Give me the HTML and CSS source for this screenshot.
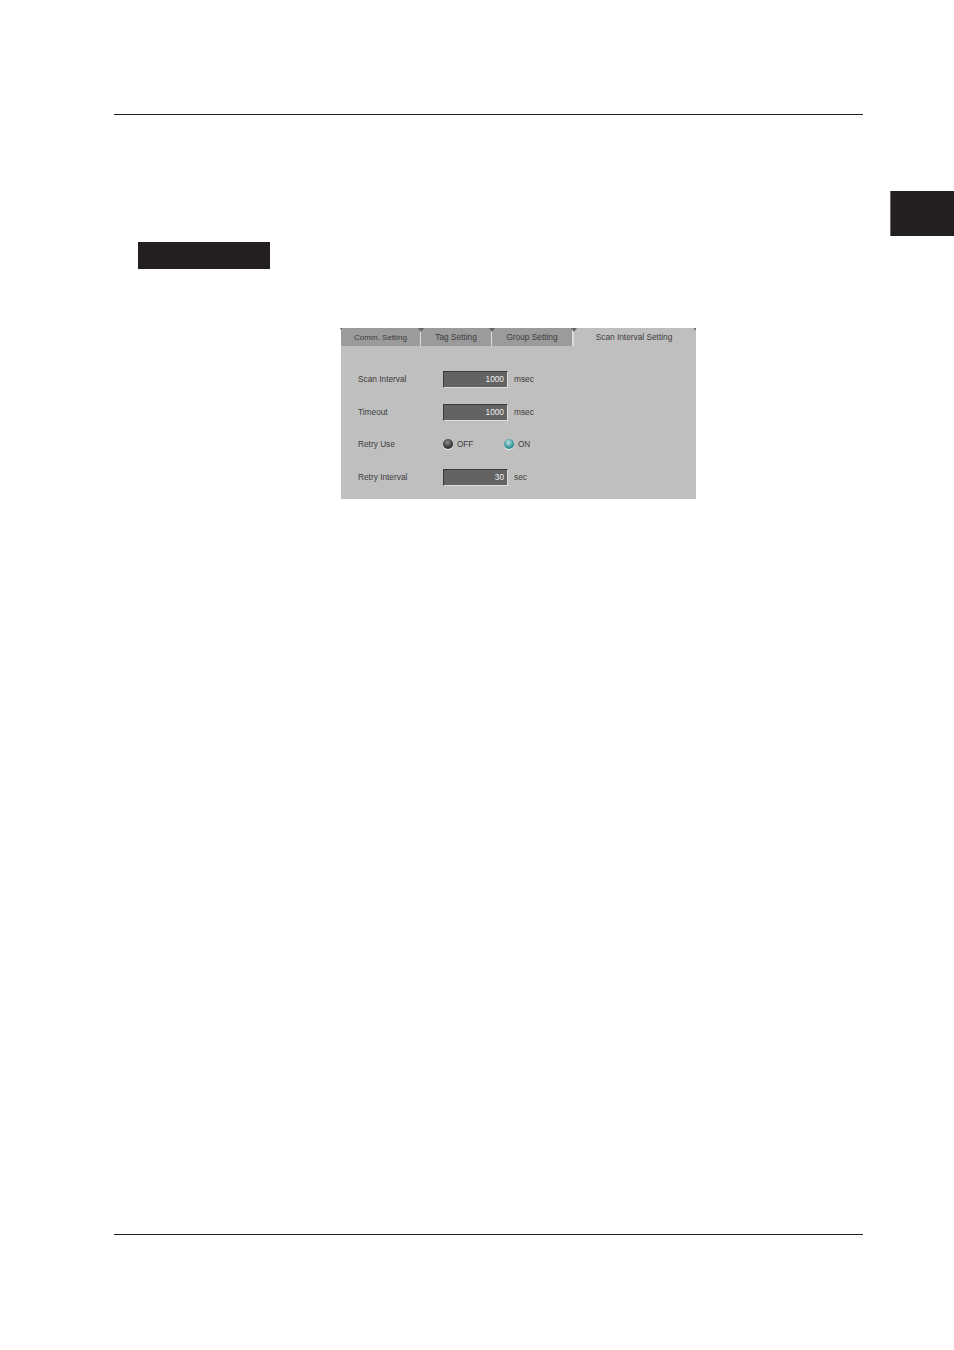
FILE: index.html
```html
<!DOCTYPE html>
<html lang="en">
<head>
<meta charset="utf-8">
<title>Scan Interval Setting</title>
<link rel="stylesheet" href="styles.css">
</head>
<body>
<div class="page">
  <div class="rule rule-top"></div>
  <div class="thumb"></div>
  <div class="heading"></div>
  <div class="panel">
    <div class="tabs">
      <div class="tab tab-comm">Comm. Setting</div>
      <div class="tab tab-tag">Tag Setting</div>
      <div class="tab tab-group">Group Setting</div>
      <div class="tab tab-scan">Scan Interval Setting</div>
    </div>
    <div class="form">
      <div class="row">
        <span class="name">Scan Interval</span>
        <span class="field">1000</span>
        <span class="unit">msec</span>
      </div>
      <div class="row">
        <span class="name">Timeout</span>
        <span class="field">1000</span>
        <span class="unit">msec</span>
      </div>
      <div class="row row-radio">
        <span class="name">Retry Use</span>
        <span class="radio radio-off"></span>
        <span class="radio-label label-off">OFF</span>
        <span class="radio radio-on"></span>
        <span class="radio-label">ON</span>
      </div>
      <div class="row">
        <span class="name">Retry Interval</span>
        <span class="field">30</span>
        <span class="unit">sec</span>
      </div>
    </div>
  </div>
  <div class="rule rule-bottom"></div>
</div>
</body>
</html>
```

FILE: styles.css
```css
html, body {
  margin: 0;
  padding: 0;
  background: #fff;
}

.page {
  width: 954px;
  height: 1350px;
  display: flex;
  flex-direction: column;
  overflow: hidden;
  font-family: "Liberation Sans", Arial, sans-serif;
}

.rule {
  width: 749px;
  height: 1px;
  margin-left: 114px;
  background: #231f20;
}

.rule-top {
  margin-top: 114px;
}

.rule-bottom {
  margin-top: 735px;
}

.thumb {
  width: 64px;
  height: 45px;
  margin-top: 76px;
  align-self: flex-end;
  box-sizing: border-box;
  background: #231f20;
  border-left: 1px solid #6d6a6b;
}

.heading {
  width: 132px;
  height: 27px;
  margin-top: 6px;
  margin-left: 138px;
  background: #231f20;
}

.panel {
  width: 355px;
  height: 171px;
  margin-top: 59px;
  margin-left: 341px;
  background: #bfbfbf;
  color: #3c3c3c;
  font-size: 8.3px;
}

.tabs {
  display: flex;
  height: 18px;
}

.tab {
  position: relative;
  box-sizing: border-box;
  display: flex;
  align-items: center;
  justify-content: center;
  background: #9b9b9b;
  border-right: 1px solid #dcdcdc;
}

.tab::before {
  content: "";
  position: absolute;
  top: 0;
  left: -3px;
  border-top: 4px solid #666;
  border-left: 3px solid transparent;
  border-right: 3px solid transparent;
}

.tab-comm {
  width: 80px;
  font-size: 8px;
}

.tab-comm::before {
  left: -1px;
  border-top-width: 2px;
  border-left-width: 1px;
  border-right-width: 1px;
}

.tab-tag {
  width: 71px;
}

.tab-group {
  width: 82px;
  border-right-width: 2px;
}

.tab-scan {
  width: 122px;
  background: #bfbfbf;
  border-right: 0;
  padding-right: 2px;
}

.tab-scan::after {
  content: "";
  position: absolute;
  top: 0;
  right: 0;
  border-top: 3px solid #666;
  border-left: 1px solid transparent;
  border-right: 1px solid transparent;
}

.form {
  display: flex;
  flex-direction: column;
  gap: 15px;
  padding-top: 24px;
}

.row {
  display: flex;
  align-items: center;
  height: 18px;
  padding-left: 17px;
}

.row-radio {
  margin-top: -1px;
}

.name {
  width: 85px;
}

.field {
  box-sizing: border-box;
  width: 65px;
  height: 17px;
  padding-right: 3px;
  display: flex;
  align-items: center;
  justify-content: flex-end;
  background: #636363;
  color: #f0f0f0;
  border-top: 1px solid #3a3a3a;
  border-left: 1px solid #3a3a3a;
  border-right: 1px solid #dcdcdc;
  border-bottom: 1px solid #dcdcdc;
}

.unit {
  margin-left: 6px;
}

.radio {
  width: 10px;
  height: 10px;
  border-radius: 50%;
  box-shadow: 0 1px 0 #f4f4f4;
}

.radio-off {
  background: radial-gradient(circle at 45% 35%, #8c8c8c, #2a2a2a 70%);
}

.radio-on {
  background: radial-gradient(circle at 45% 35%, #b4e6e6, #25858c 70%);
}

.radio-label {
  margin-left: 4px;
  font-size: 8.2px;
}

.label-off {
  width: 47px;
}
```
